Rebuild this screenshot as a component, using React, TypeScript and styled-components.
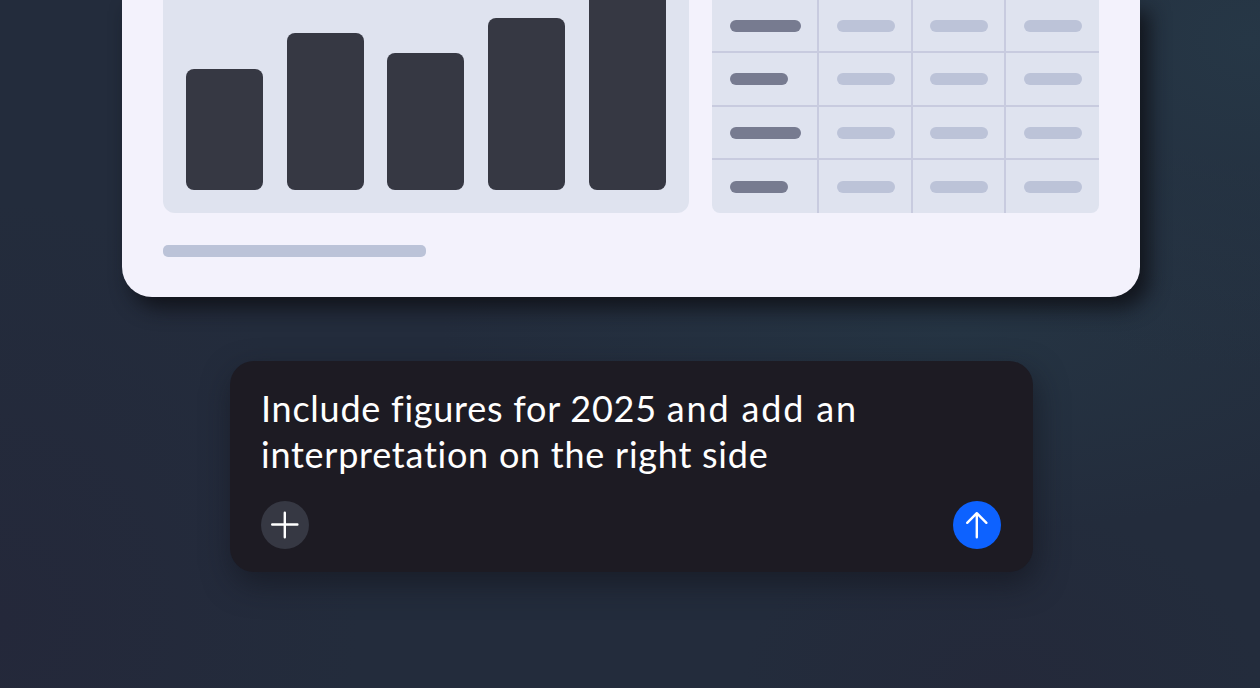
import React from "react";
import styled, { createGlobalStyle } from "styled-components";

type IRow = {
  id: number;
  wide: boolean;
};

const bars: number[] = [121, 157, 136.5, 172, 208];

const rows: IRow[] = [
  { id: 1, wide: true },
  { id: 2, wide: false },
  { id: 3, wide: true },
  { id: 4, wide: false },
];

const PlusIcon = () => (
  <svg width="48" height="48" viewBox="0 0 48 48" fill="none">
    <path
      d="M23.8 11.8V36.2M11.2 23.5H36.4"
      stroke="#fff"
      strokeWidth="2.4"
      strokeLinecap="round"
    />
  </svg>
);

const ArrowUpIcon = () => (
  <svg width="48" height="48" viewBox="0 0 48 48" fill="none">
    <path
      d="M23.8 36.2V12.2M14.2 21.8L23.8 12.2L33.4 21.8"
      stroke="#fff"
      strokeWidth="2.4"
      strokeLinecap="round"
      strokeLinejoin="round"
    />
  </svg>
);

const Slide = () => (
  <SlideCard>
    <Panels>
      <ChartPanel>
        {bars.map((height, key) => (
          <Bar key={key} style={{ height }} />
        ))}
      </ChartPanel>
      <Table>
        {rows.map((row) => (
          <TableRow key={row.id}>
            <Cell>
              <Pill $dark $width={row.wide ? 71 : 58} />
            </Cell>
            <Cell>
              <Pill $width={58} />
            </Cell>
            <Cell>
              <Pill $width={58} />
            </Cell>
            <Cell>
              <Pill $width={58} />
            </Cell>
          </TableRow>
        ))}
      </Table>
    </Panels>
    <Caption />
  </SlideCard>
);

const Prompt = () => (
  <PromptBox>
    <PromptText>
      <Line>
        <Words $spacing={0.75}>Include figures for 2025 </Words>
        <Words $spacing={1.85}>and add an</Words>
      </Line>
      <Line>
        <Words $spacing={0.75}>interpretation on the right side</Words>
      </Line>
    </PromptText>
    <Actions>
      <RoundButton aria-label="Add">
        <PlusIcon />
      </RoundButton>
      <RoundButton $primary aria-label="Send">
        <ArrowUpIcon />
      </RoundButton>
    </Actions>
  </PromptBox>
);

const App = () => {
  return (
    <>
      <GlobalStyle />
      <Page>
        <Slide />
        <Prompt />
      </Page>
    </>
  );
};

export default App;

const GlobalStyle = createGlobalStyle`
  * {
    box-sizing: border-box;
  }
  body {
    margin: 0;
    overflow: hidden;
  }
`;

const Page = styled.main`
  display: flex;
  flex-direction: column;
  align-items: center;
  gap: 64px;
  height: 688px;
  overflow: hidden;
  background:
    radial-gradient(ellipse 420px 330px at 1250px 40px, #263746 0%, transparent 100%),
    radial-gradient(ellipse 520px 200px at 960px 330px, #253443 0%, transparent 100%),
    radial-gradient(ellipse 360px 420px at 0 620px, #24283a 0%, transparent 100%),
    radial-gradient(ellipse 260px 180px at 1000px 688px, #24293a 0%, transparent 100%),
    #232c3c;
`;

const SlideCard = styled.section`
  display: flex;
  flex-direction: column;
  justify-content: flex-end;
  flex-shrink: 0;
  width: 1017.5px;
  height: 297px;
  margin-left: 1.5px;
  padding: 0 40.5px 40px;
  background: #f3f2fc;
  border-radius: 0 0 30px 30px;
  box-shadow: 9px 11px 20px rgba(14, 15, 21, 0.85);
`;

const Panels = styled.div`
  display: flex;
  justify-content: space-between;
  height: 213px;
`;

const ChartPanel = styled.div`
  display: flex;
  align-items: flex-end;
  justify-content: space-between;
  width: 526.5px;
  padding: 0 23.5px 23.3px;
  background: #dfe3ef;
  border-radius: 0 0 12px 12px;
  overflow: hidden;
`;

const Bar = styled.div`
  flex-shrink: 0;
  width: 77px;
  background: #363843;
  border-radius: 8px;
`;

const Table = styled.div`
  display: flex;
  flex-direction: column;
  justify-content: flex-end;
  width: 387px;
  background: #dfe3ef;
  border-radius: 0 0 8px 8px;
  overflow: hidden;
`;

const Cell = styled.div`
  display: flex;
  align-items: center;
  padding: 1px 0 0 18px;
  & + & {
    padding-left: 17.5px;
    border-left: 2px solid #c8cbdf;
  }
`;

const TableRow = styled.div`
  display: grid;
  grid-template-columns: 105px 93.5px 93.5px 95px;
  flex-shrink: 0;
  height: 53.5px;
  border-top: 2px solid #c8cbdf;
  &:last-child {
    height: 55px;
  }
  &:last-child ${Cell} {
    padding-top: 0;
  }
`;

const Pill = styled.div<{ $width: number; $dark?: boolean }>`
  width: ${({ $width }) => $width}px;
  height: 12px;
  border-radius: 6px;
  background: ${({ $dark }) => ($dark ? "#777b90" : "#bcc3d8")};
`;

const Caption = styled.div`
  width: 263.5px;
  height: 12px;
  margin-top: 32px;
  border-radius: 5px;
  background: #bbc3d8;
`;

const PromptBox = styled.section`
  display: flex;
  flex-direction: column;
  justify-content: space-between;
  flex-shrink: 0;
  width: 803px;
  height: 210.5px;
  margin-left: 2px;
  padding: 24px 31.5px 22.5px;
  background: #1d1b23;
  border-radius: 24px;
  box-shadow: 3px 12px 30px rgba(18, 20, 28, 0.6);
`;

const PromptText = styled.div`
  font-family: Lato, sans-serif;
  font-size: 36px;
  line-height: 46px;
  color: #fff;
`;

const Line = styled.div`
  white-space: pre;
`;

const Words = styled.span<{ $spacing: number }>`
  letter-spacing: ${({ $spacing }) => $spacing}px;
`;

const Actions = styled.div`
  display: flex;
  justify-content: space-between;
`;

const RoundButton = styled.button<{ $primary?: boolean }>`
  display: flex;
  width: 48px;
  height: 48px;
  padding: 0;
  border: none;
  border-radius: 50%;
  background: ${({ $primary }) => ($primary ? "#0d62ff" : "#363843")};
`;
